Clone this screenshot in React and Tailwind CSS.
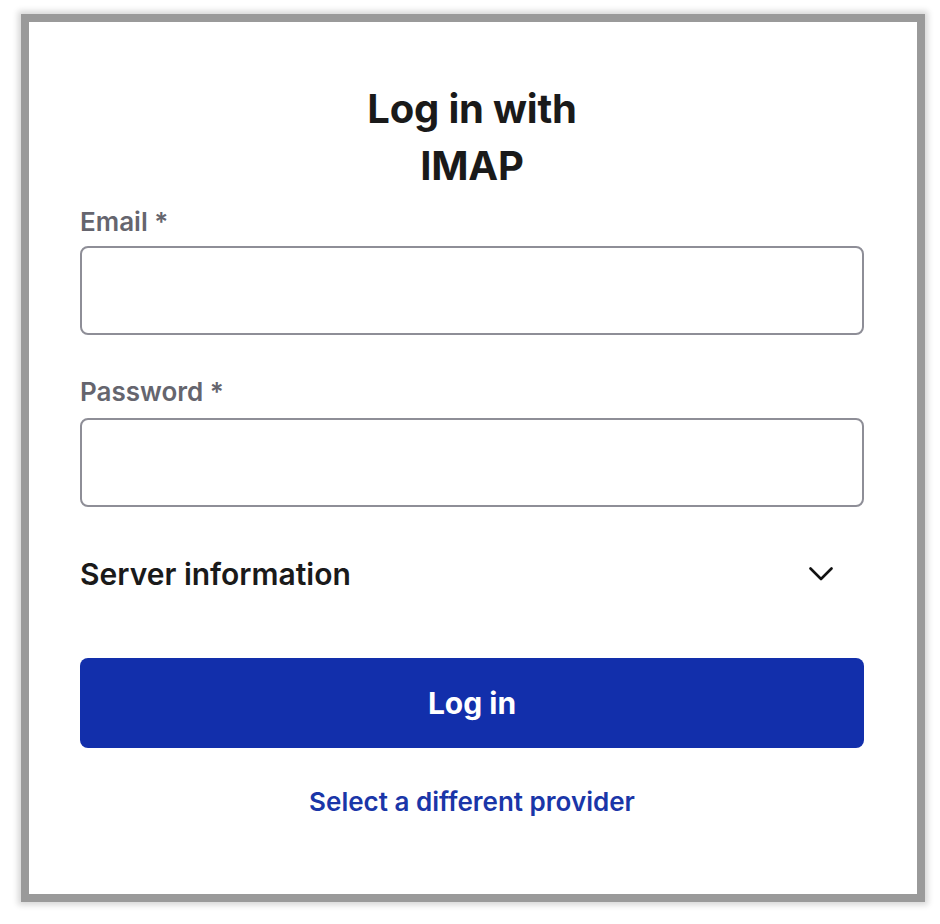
import React from "react";

// IMAP login card
export default function App() {
  return (
    <div className="min-h-screen bg-white pt-[14px] pl-[21px]" style={{ fontFamily: "Inter, 'Noto Sans', sans-serif" }}>
      <div className="w-[904px] h-[888px] border-8 border-[#9a9a9a] bg-white shadow-[0_0_6px_3px_rgba(0,0,0,0.16)]">
        <div className="flex flex-col pl-[51px] pr-[53px] pt-[58px]">
          <h1 className="text-center text-[40px] leading-[57px] font-bold text-[#1a1a1a] tracking-[-0.2px]">
            Log in with
            <br />
            IMAP
          </h1>

          <label className="mt-[12px] text-[26px] leading-[32px] font-semibold text-[#65656e]">Email *</label>
          <input
            type="email"
            className="mt-[8px] h-[89px] w-full rounded-[8px] border-2 border-[#8e8e97] bg-white px-4 text-[24px] outline-none"
          />

          <label className="mt-[41px] text-[26px] leading-[32px] font-semibold text-[#65656e]">Password *</label>
          <input
            type="password"
            className="mt-[10px] h-[89px] w-full rounded-[8px] border-2 border-[#8e8e97] bg-white px-4 text-[24px] outline-none"
          />

          <div className="mt-[46px] flex items-center justify-between pr-[31px]">
            <span className="text-[30px] leading-[42px] font-semibold text-[#1a1a1a]">Server information</span>
            <svg width="24" height="14" viewBox="0 0 24 14" fill="none">
              <path d="M1.5 1.5 L12 12 L22.5 1.5" stroke="#111" strokeWidth="2.6" strokeLinecap="round" strokeLinejoin="round" />
            </svg>
          </div>

          <button className="mt-[63px] h-[90px] w-full rounded-[8px] bg-[#122fab] text-[30px] font-bold text-white">
            Log in
          </button>

          <a href="#" className="mt-[34px] self-center text-[26px] font-semibold text-[#1a36a8]">
            Select a different provider
          </a>
        </div>
      </div>
    </div>
  );
}
